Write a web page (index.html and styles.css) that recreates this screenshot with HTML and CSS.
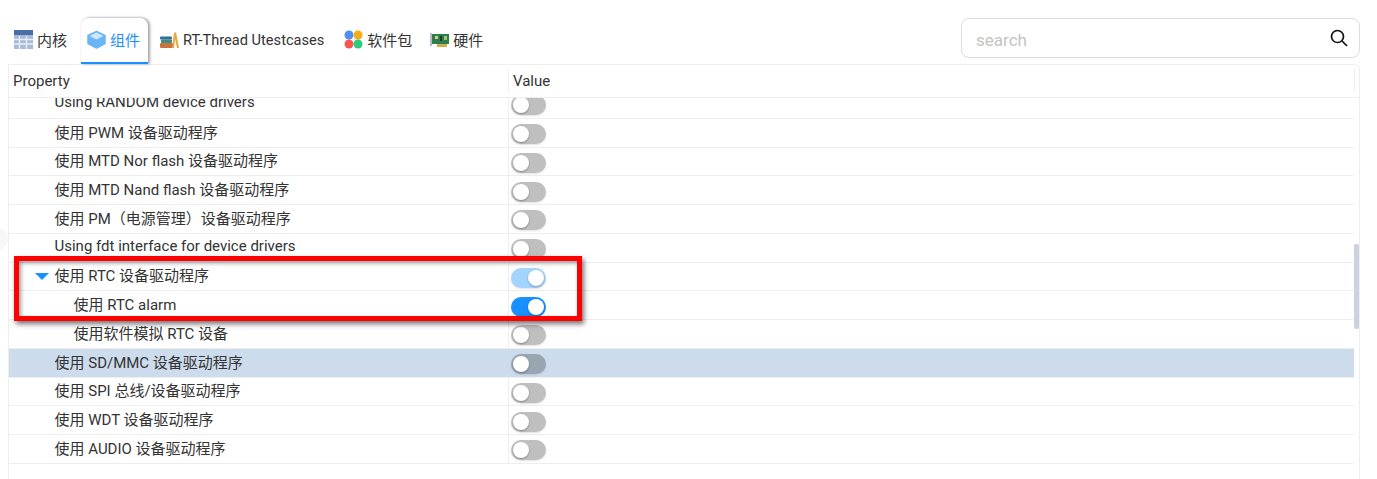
FILE: index.html
```html
<!DOCTYPE html>
<html lang="en">
<head>
    <meta charset="UTF-8">
    <meta name="viewport" content="width=device-width, initial-scale=1.0">
    <title>RT-Thread Settings</title>
    <link rel="stylesheet" href="styles.css">
</head>
<body>
    <div class="toolbar">
        <div class="tabs">
            <div class="tab">
                <svg class="tab-icon" viewBox="0 0 19 19">
                    <rect x="0" y="0" width="19" height="19" fill="#a6bada"/>
                    <rect x="0" y="0" width="19" height="5" fill="#4a6ea9"/>
                    <path d="M5.5 6v13M12.5 6v13M0 9.5h19M0 14h19" stroke="#e8edf5" stroke-width="1.4"/>
                </svg>
                <span>内核</span>
            </div>
            <div class="tab active">
                <svg class="tab-icon" viewBox="0 0 19 19">
                    <path d="M9.5 1.5 18 5.5v8L9.5 18 1 13.500v-8z" fill="#69b5f5" stroke="#69b5f5" stroke-width="1.5" stroke-linejoin="round"/>
                    <path d="M9.500 2.500 16.500 6 9.500 9.500 2.500 6z" fill="#cfe7fb"/>
                </svg>
                <span>组件</span>
            </div>
            <div class="tab">
                <svg class="tab-icon" viewBox="0 0 19 19">
                    <rect x="0" y="13" width="13" height="5" rx="1" fill="#c9733f"/>
                    <rect x="1" y="9.500" width="11" height="3.500" rx="1" fill="#3b8f7e"/>
                    <rect x="0" y="6.500" width="12" height="3" rx="1" fill="#2f6f9b"/>
                    <path d="M12 18 14 3l2-1 3 16h-2l-2-9-1 9z" fill="#e8a93e"/>
                </svg>
                <span class="tab-latin">RT-Thread Utestcases</span>
            </div>
            <div class="tab tab-narrow">
                <svg class="tab-icon" viewBox="0 0 19 19">
                    <circle cx="5" cy="5" r="4.500" fill="#4f8ff7"/>
                    <circle cx="14" cy="5" r="4.500" fill="#fbab18"/>
                    <circle cx="5" cy="14" r="4.500" fill="#f8564e"/>
                    <circle cx="14" cy="14" r="4.500" fill="#2fcb7c"/>
                </svg>
                <span>软件包</span>
            </div>
            <div class="tab">
                <svg class="tab-icon" viewBox="0 0 19 19">
                    <rect x="0" y="3" width="2" height="13" fill="#b4bcc4"/>
                    <rect x="2" y="4" width="17" height="10" fill="#2e7d4f"/>
                    <rect x="5" y="6" width="3" height="3" fill="#d9d27a"/>
                    <rect x="10" y="6" width="2" height="5" fill="#16402a"/>
                    <rect x="14" y="6" width="3" height="4" fill="#a6c46a"/>
                    <rect x="7" y="14" width="10" height="3" fill="#cfae4e"/>
                </svg>
                <span>硬件</span>
            </div>
        </div>
        <div class="search">
            <input class="search-input" type="text" placeholder="search">
            <svg class="search-icon" viewBox="0 0 18 18">
                <circle cx="7.500" cy="7.500" r="6" fill="none" stroke="#111" stroke-width="1.700"/>
                <path d="M12 12l5 5" stroke="#111" stroke-width="1.700"/>
            </svg>
        </div>
    </div>

    <div class="table">
        <div class="table-head">
            <div class="col-name">Property</div>
            <div class="col-value">Value</div>
        </div>
        <div class="table-body">
            <div class="rows">
                <div class="row"><div class="col-name lvl1">Using RANDOM device drivers</div><div class="col-value"><span class="toggle"></span></div></div>
                <div class="row"><div class="col-name lvl1">使用 PWM 设备驱动程序</div><div class="col-value"><span class="toggle"></span></div></div>
                <div class="row"><div class="col-name lvl1">使用 MTD Nor flash 设备驱动程序</div><div class="col-value"><span class="toggle"></span></div></div>
                <div class="row"><div class="col-name lvl1">使用 MTD Nand flash 设备驱动程序</div><div class="col-value"><span class="toggle"></span></div></div>
                <div class="row"><div class="col-name lvl1">使用 PM（电源管理）设备驱动程序</div><div class="col-value"><span class="toggle"></span></div></div>
                <div class="row"><div class="col-name lvl1">Using fdt interface for device drivers</div><div class="col-value"><span class="toggle"></span></div></div>
                <div class="row"><div class="col-name lvl1"><span class="arrow"></span>使用 RTC 设备驱动程序</div><div class="col-value"><span class="toggle on faded"></span></div></div>
                <div class="row"><div class="col-name lvl2">使用 RTC alarm</div><div class="col-value"><span class="toggle on"></span></div></div>
                <div class="row"><div class="col-name lvl2">使用软件模拟 RTC 设备</div><div class="col-value"><span class="toggle"></span></div></div>
                <div class="row selected"><div class="col-name lvl1">使用 SD/MMC 设备驱动程序</div><div class="col-value"><span class="toggle"></span></div></div>
                <div class="row"><div class="col-name lvl1">使用 SPI 总线/设备驱动程序</div><div class="col-value"><span class="toggle"></span></div></div>
                <div class="row"><div class="col-name lvl1">使用 WDT 设备驱动程序</div><div class="col-value"><span class="toggle"></span></div></div>
                <div class="row"><div class="col-name lvl1">使用 AUDIO 设备驱动程序</div><div class="col-value"><span class="toggle"></span></div></div>
            </div>
            <div class="scrollbar"><div class="scroll-thumb"></div></div>
        </div>
    </div>

    <!-- faint handle at the window edge -->
    <div class="edge-handle"></div>
    <!-- annotation drawn over the screenshot -->
    <div class="highlight"></div>
</body>
</html>
```
FILE: styles.css
```css
* {
    box-sizing: border-box;
}

html, body {
    height: 100%;
}

body {
    margin: 0;
    padding: 18px 17px 0 8px;
    overflow: hidden;
    background: #fff;
    color: #333;
    font-family: Roboto, "Noto Sans CJK SC", sans-serif;
    font-size: 15px;
}

.toolbar {
    display: flex;
    justify-content: space-between;
    align-items: flex-start;
    height: 46px;
}

.tabs {
    display: flex;
    gap: 6px;
    height: 46px;
    position: relative;
    z-index: 1;
}

.tab {
    display: flex;
    align-items: center;
    gap: 4px;
    padding: 0 8px 3px 6px;
    height: 46px;
    white-space: nowrap;
}

.tab-latin {
    font-size: 14.6px;
}

.tab-narrow {
    padding-right: 6px;
}

.tab.active {
    color: #1890ff;
    background: #fff;
    border-bottom: 2px solid #1890ff;
    padding-bottom: 1px;
    border-radius: 8px 8px 0 0;
    box-shadow: 2px 0 3px rgba(0, 0, 0, 0.35), 0 -1px 2px rgba(0, 0, 0, 0.08);
}

.tab-icon {
    width: 19px;
    height: 19px;
    flex: 0 0 auto;
}

.search {
    display: flex;
    align-items: center;
    width: 399px;
    height: 40px;
    padding: 0 11px 0 14px;
    border: 1px solid #ddd;
    border-radius: 8px;
}

.search-input {
    flex: 1;
    min-width: 0;
    border: none;
    outline: none;
    padding: 3px 0 0;
    font: inherit;
    font-size: 17px;
}

.search-input::placeholder {
    color: #c4c4c4;
}

.search-icon {
    width: 18px;
    height: 18px;
}

.table {
    height: 415px;
    border: 1px solid #eee;
    border-bottom: none;
    border-radius: 0 6px 0 0;
}

.table-head {
    display: flex;
    align-items: center;
    height: 33px;
    padding-right: 4px;
    border-bottom: 1px solid #eee;
    color: #333;
}

.table-head .col-value {
    flex: 1;
    height: 24px;
    line-height: 24px;
    border-left: 1px solid #eee;
    border-right: 1px solid #eee;
}

.table-head .col-name {
    padding-left: 4px;
}

.table-body {
    display: flex;
    height: 381px;
    overflow: hidden;
}

.rows {
    flex: 1;
    margin-top: -8px;
}

.row {
    display: flex;
    align-items: stretch;
    height: 28.75px;
    border-bottom: 1px solid #eee;
}

.row.selected {
    background: #cddcec;
}

.col-name {
    flex: 0 0 499px;
    display: flex;
    align-items: center;
    white-space: pre;
    padding-bottom: 3px;
}

.col-value {
    flex: 1;
    display: flex;
    align-items: center;
    padding: 3px 0 0 2px;
    border-left: 1px solid #eee;
}

.table-head .col-name,
.table-head .col-value {
    padding-top: 0;
    padding-bottom: 0;
}

.table-head .col-value {
    padding-left: 4px;
}

.row.selected .col-value {
    border-left-color: #cddcec;
}

.lvl1 {
    padding-left: 45.5px;
    position: relative;
}

.lvl2 {
    padding-left: 64.5px;
}

.arrow {
    position: absolute;
    left: 26px;
    top: 10px;
    border-left: 7px solid transparent;
    border-right: 7px solid transparent;
    border-top: 7px solid #1890ff;
}

.toggle {
    display: flex;
    align-items: center;
    width: 35px;
    height: 20px;
    padding: 2px;
    border-radius: 10px;
    background: rgba(0, 0, 0, 0.25);
    box-shadow: 0 1px 2px rgba(0, 0, 0, 0.12);
}

.toggle::after {
    content: "";
    width: 16px;
    height: 16px;
    border-radius: 50%;
    background: #fff;
    box-shadow: 0 1px 2px rgba(0, 0, 0, 0.3);
}

.toggle.on {
    justify-content: flex-end;
    background: #1890ff;
}

.toggle.faded {
    background: #a3d3ff;
}

.scrollbar {
    flex: 0 0 5px;
    padding-top: 146px;
}

.scroll-thumb {
    height: 85px;
    border-radius: 2px;
    background: #cdd3de;
}

.edge-handle {
    position: absolute;
    left: -14px;
    top: 228px;
    width: 22px;
    height: 22px;
    border-radius: 50%;
    background: #f7f7f7;
}

.highlight {
    position: absolute;
    left: 14px;
    top: 256px;
    width: 568px;
    height: 65px;
    border: 5px solid #f00;
    box-shadow: 2px 3px 5px rgba(0, 0, 0, 0.55), inset 2px 2px 4px rgba(0, 0, 0, 0.4);
}
```
